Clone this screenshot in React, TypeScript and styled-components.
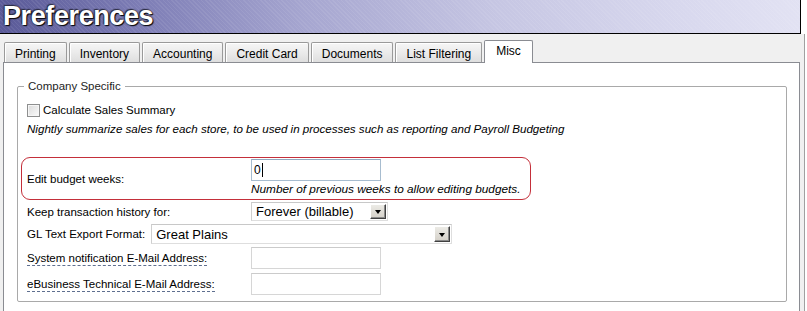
import React from "react";
import styled, { createGlobalStyle } from "styled-components";

const Global = createGlobalStyle`
  html, body { margin: 0; padding: 0; background: #fff; }
  body { font-family: "Liberation Sans", Arial, sans-serif; }
  * { box-sizing: border-box; }
`;

const Frame = styled.div`
  width: 807px;
  height: 311px;
  overflow: hidden;
  background: #fff;
  display: flex;
  flex-direction: column;
`;

const Header = styled.header`
  width: 801px;
  height: 34px;
  flex: none;
  padding-left: 3px;
  border-right: 1px solid #000;
  border-bottom: 1px solid #000;
  background-image: repeating-linear-gradient(45deg, rgba(255, 255, 255, 0.07) 0 1px, transparent 1px 3px),
    linear-gradient(90deg, #5a5a98 0%, #7e7eb6 18%, #a6a6d0 38%, #c6c6e3 62%, #d8d8ee 85%, #e2e2f3 100%);
`;

const Title = styled.h1`
  margin: 0;
  font: bold 27px/33px "Liberation Sans", Arial, sans-serif;
  letter-spacing: -0.4px;
  color: #fff;
  text-shadow: 0 0 2px #1a1a2a, 1px 1px 1px #000, -1px -1px 1px #33334a;
`;

const Body = styled.div`
  width: 805px;
  flex: 1;
  display: flex;
  flex-direction: column;
  background: #f0f0f0;
  border-right: 1px solid #a0a0a0;
  padding: 6px 4px 0 3px;
`;

const TabStrip = styled.div`
  height: 22px;
  display: flex;
  align-items: flex-end;
  gap: 2px;
  padding-left: 1px;
  position: relative;
  z-index: 1;
`;

const Tab = styled.div<{ $active?: boolean }>`
  height: ${(p) => (p.$active ? "23px" : "20px")};
  margin-bottom: ${(p) => (p.$active ? "-1px" : "0")};
  padding: ${(p) => (p.$active ? "2px 11px 0" : "3px 10px 0")};
  font-size: 12px;
  line-height: 16px;
  color: #000;
  border: 1px solid ${(p) => (p.$active ? "#8a8c92" : "#9a9a9a")};
  border-bottom: none;
  border-radius: 2px 2px 0 0;
  background: ${(p) =>
    p.$active ? "#fff" : "linear-gradient(#f6f6f6 0%, #ebebeb 50%, #dedede 100%)"};
  box-shadow: ${(p) => (p.$active ? "none" : "inset 1px 1px 0 #fff")};
  white-space: nowrap;
`;

const Panel = styled.div`
  flex: 1;
  background: #fff;
  border: 1px solid #8a8c92;
  border-bottom: none;
  padding: 16px 12px 0 13px;
`;

const Group = styled.fieldset`
  margin: 0;
  padding: 0 6px 6px 3px;
  border: 1px solid #a9a9a9;
  border-radius: 2px;
`;

const Legend = styled.legend`
  margin-left: 3px;
  padding: 0 4px;
  font-size: 11.5px;
  line-height: 15px;
  color: #1e1e1e;
`;

const CheckRow = styled.label`
  margin-top: 8px;
  height: 16px;
  padding-left: 6px;
  display: flex;
  align-items: center;
  gap: 3px;
  font-size: 11.5px;
  color: #000;
`;

const CheckBox = styled.span`
  width: 13px;
  height: 13px;
  flex: none;
  border: 1px solid #8e8f8f;
  box-shadow: inset 0 0 0 1px #f6f6f6;
  background: linear-gradient(135deg, #dadada, #fbfbfb);
`;

const Hint = styled.div`
  margin-top: 3px;
  padding-left: 6px;
  font-size: 11.6px;
  line-height: 16px;
  font-style: italic;
  color: #000;
  white-space: nowrap;
`;

const HighlightBox = styled.div`
  margin-top: 20px;
  width: 510px;
  border: 1px solid #c42f3a;
  border-radius: 9px;
  padding: 1px 0 1px 5px;
  display: grid;
  grid-template-columns: 224px 1fr;
  grid-template-rows: 22px 17px;
`;

const BoxLabel = styled.div`
  grid-row: 1 / span 2;
  align-self: center;
  font-size: 11.5px;
  color: #000;
`;

const Note = styled.div`
  font-size: 11.8px;
  line-height: 17px;
  font-style: italic;
  color: #000;
  white-space: nowrap;
`;

const FormRow = styled.div<{ $top: number; $h: number }>`
  margin-top: ${(p) => p.$top}px;
  height: ${(p) => p.$h}px;
  padding-left: 6px;
  display: grid;
  grid-template-columns: 224px auto;
  align-items: center;
  justify-items: start;
`;

const InlineRow = styled.div<{ $top: number; $h: number }>`
  margin-top: ${(p) => p.$top}px;
  height: ${(p) => p.$h}px;
  padding-left: 6px;
  display: flex;
  align-items: center;
  gap: 6px;
`;

const Label = styled.span<{ $help?: boolean }>`
  font-size: 11.5px;
  line-height: 14px;
  color: #000;
  white-space: nowrap;
  border-bottom: ${(p) => (p.$help ? "1px dashed #5f6f8f" : "none")};
`;

const TextBox = styled.div<{ $focused?: boolean }>`
  width: 130px;
  height: 22px;
  padding-left: 2px;
  display: flex;
  align-items: center;
  border: 1px solid ${(p) => (p.$focused ? "#a7bccf" : "#d6d6d6")};
  border-top-color: ${(p) => (p.$focused ? "#8fa8bf" : "#cbcbcb")};
  background: #fff;
  font: 12px "Liberation Sans", Arial, sans-serif;
  color: #000;
`;

const Caret = styled.span`
  width: 1px;
  height: 14px;
  margin-left: 1px;
  background: #000;
`;

const Select = styled.div<{ $w: number; $h: number }>`
  width: ${(p) => p.$w}px;
  height: ${(p) => p.$h}px;
  display: flex;
  align-items: center;
  justify-content: space-between;
  padding: 0 1px 0 4px;
  border: 1px solid #dedede;
  border-top-color: #c8c8c8;
  border-left-color: #cfcfcf;
  background: #fff;
  font: 13px "Liberation Sans", Arial, sans-serif;
  color: #000;
`;

const DropButton = styled.span`
  width: 16px;
  height: calc(100% - 2px);
  display: flex;
  align-items: center;
  justify-content: center;
  background: linear-gradient(#ecebe6, #d4d0c8);
  border: 1px solid;
  border-color: #fff #404040 #404040 #fff;
  box-shadow: inset -1px -1px 0 #8a8a8a;
  &::after {
    content: "";
    border-left: 3.5px solid transparent;
    border-right: 3.5px solid transparent;
    border-top: 4px solid #000;
    margin-top: 1px;
  }
`;

const tabs = ["Printing", "Inventory", "Accounting", "Credit Card", "Documents", "List Filtering", "Misc"];

export default function App() {
  return (
    <>
      <Global />
      <Frame>
        <Header>
          <Title>Preferences</Title>
        </Header>
        <Body>
          <TabStrip>
            {tabs.map((t) => (
              <Tab key={t} $active={t === "Misc"}>
                {t}
              </Tab>
            ))}
          </TabStrip>
          <Panel>
            <Group>
              <Legend>Company Specific</Legend>
              <CheckRow>
                <CheckBox />
                Calculate Sales Summary
              </CheckRow>
              <Hint>
                Nightly summarize sales for each store, to be used in processes such as reporting and Payroll Budgeting
              </Hint>
              <HighlightBox>
                <BoxLabel>Edit budget weeks:</BoxLabel>
                <TextBox $focused>
                  0<Caret />
                </TextBox>
                <Note>Number of previous weeks to allow editing budgets.</Note>
              </HighlightBox>
              <FormRow $top={2} $h={19}>
                <Label>Keep transaction history for:</Label>
                <Select $w={137} $h={19}>
                  Forever (billable)
                  <DropButton />
                </Select>
              </FormRow>
              <InlineRow $top={3} $h={20}>
                <Label>GL Text Export Format:</Label>
                <Select $w={301} $h={20}>
                  Great Plains
                  <DropButton />
                </Select>
              </InlineRow>
              <FormRow $top={3} $h={22}>
                <Label $help>System notification E-Mail Address:</Label>
                <TextBox />
              </FormRow>
              <FormRow $top={4} $h={22}>
                <Label $help>eBusiness Technical E-Mail Address:</Label>
                <TextBox />
              </FormRow>
            </Group>
          </Panel>
        </Body>
      </Frame>
    </>
  );
}
